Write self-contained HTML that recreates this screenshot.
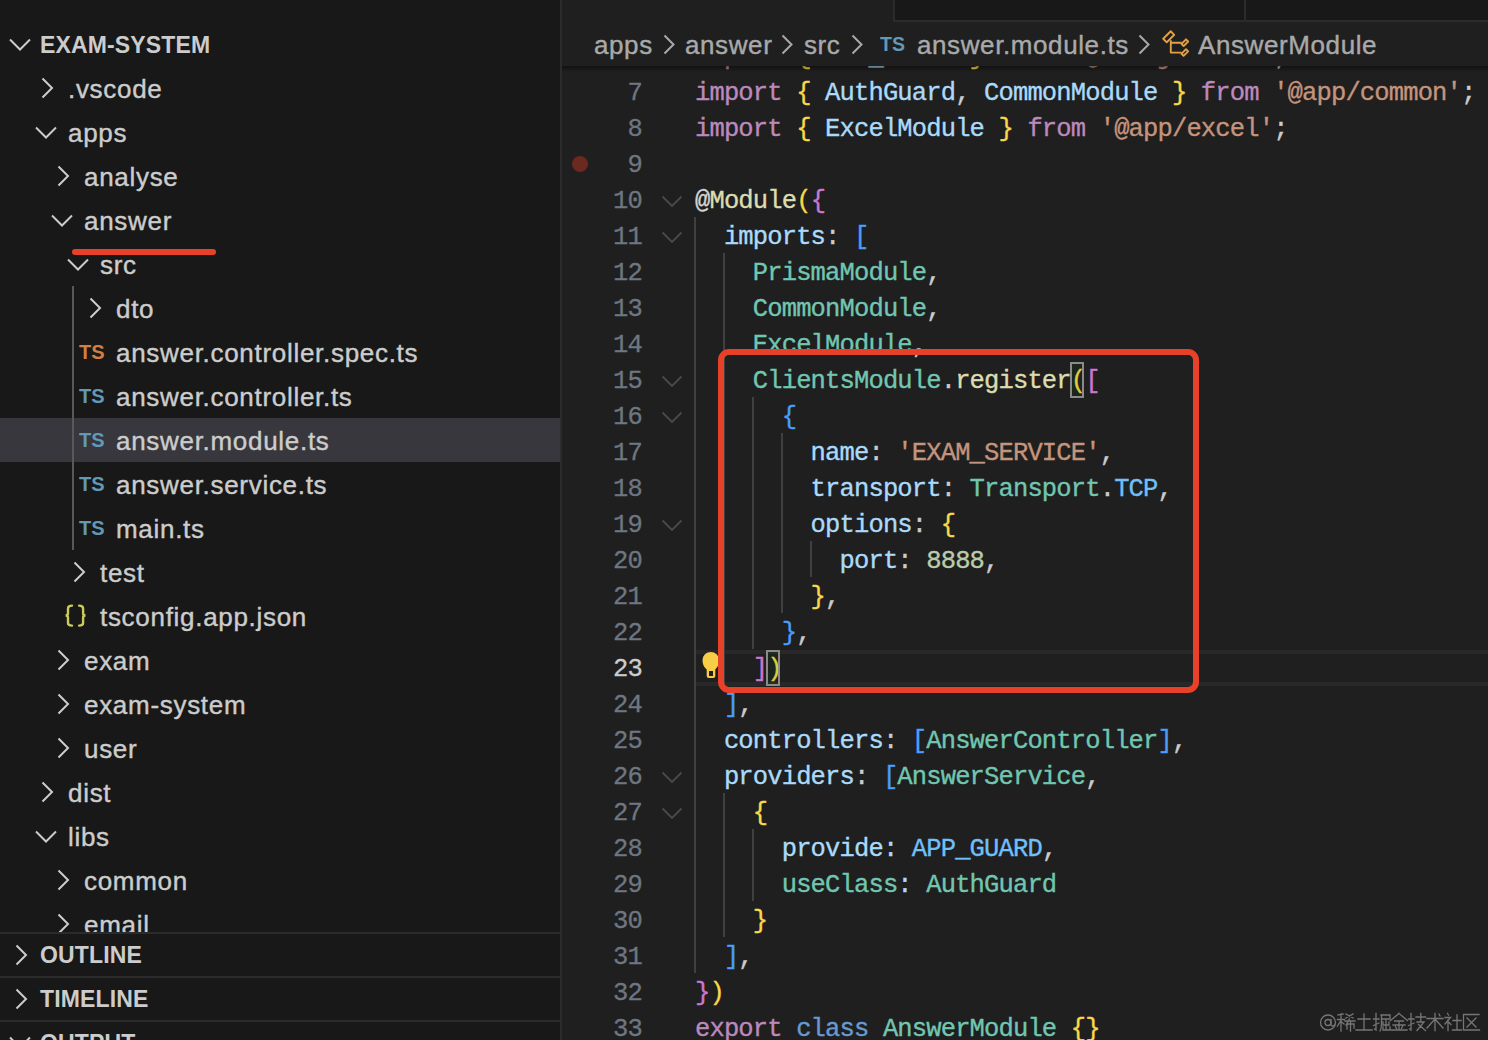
<!DOCTYPE html>
<html><head><meta charset="utf-8"><style>
*{margin:0;padding:0;box-sizing:border-box}
html,body{width:1488px;height:1040px;overflow:hidden;background:#1f1f1f}
body{position:relative;font-family:"Liberation Sans",sans-serif}
#side{position:absolute;left:0;top:0;width:560px;height:1040px;background:#181818;overflow:hidden}
#sideb{position:absolute;left:560px;top:0;width:2px;height:1040px;background:#2b2b2b}
.row{position:absolute;height:44px;line-height:44px;font-size:26px;color:#cccccc;white-space:nowrap;padding-top:1px;letter-spacing:0.7px;-webkit-text-stroke:0.4px currentColor}
.hdr{position:absolute;height:44px;line-height:44px;font-size:23px;font-weight:bold;color:#cccccc;white-space:nowrap;letter-spacing:0.15px;padding-top:1px}
.chev{position:absolute}
.tsi{position:absolute;height:44px;line-height:44px;font-size:20px;font-weight:bold;white-space:nowrap;letter-spacing:0px}
.jsi{position:absolute;height:44px;line-height:44px;font-size:25px;font-weight:bold;color:#cbcb5a;white-space:nowrap;letter-spacing:4px;margin-top:-3px}
.sel{position:absolute;left:0;width:560px;height:44px;background:#37373d}
.guideS{position:absolute;width:2px;background:#585858}
.cl{position:absolute;left:695px;height:36px;line-height:36px;font-family:"Liberation Mono",monospace;font-size:25.5px;white-space:pre;padding-top:3px;letter-spacing:-0.85px;-webkit-text-stroke:0.35px currentColor}
.ln{position:absolute;left:560px;width:82px;text-align:right;height:36px;line-height:36px;font-family:"Liberation Mono",monospace;font-size:25.5px;letter-spacing:-0.85px;white-space:pre;padding-top:3px;-webkit-text-stroke:0.3px currentColor}
.fold{position:absolute;left:661px}
.gd{position:absolute;width:2px;background:#404040}
#tabs{position:absolute;left:893px;top:0;width:595px;height:22px;background:#181818;border-left:2px solid #2b2b2b;border-bottom:2px solid #2b2b2b}
#tabdiv{position:absolute;left:1244px;top:0;width:2px;height:20px;background:#2b2b2b}
#bc{position:absolute;left:562px;top:22px;width:926px;height:44px;background:#1f1f1f;z-index:5}
#bcsh{position:absolute;left:562px;top:66px;width:926px;height:6px;background:linear-gradient(rgba(0,0,0,0.45),rgba(0,0,0,0));z-index:5}
.bct{position:absolute;top:1px;height:44px;line-height:44px;font-size:26px;color:#a9a9a9;white-space:nowrap;letter-spacing:0.6px;-webkit-text-stroke:0.4px currentColor}
.tsb{position:absolute;top:0;height:44px;line-height:44px;font-size:19.5px;font-weight:bold;color:#6398b7;white-space:nowrap;padding-top:0px}
.pane{position:absolute;left:0;width:560px;height:44px;background:#181818;border-top:2px solid #2b2b2b}
</style></head><body>
<div id="side">
<div class="sel" style="top:418px"></div>
<div class="guideS" style="left:72px;top:286px;height:264px"></div>
<svg class="chev" style="left:8px;top:38px" width="24" height="14" viewBox="0 0 24 14"><path d="M2 1.5 L12 11.5 L22 1.5" fill="none" stroke="#cccccc" stroke-width="2"/></svg>
<div class="hdr" style="left:40px;top:22px">EXAM-SYSTEM</div>
<svg class="chev" style="left:40px;top:76px" width="14" height="24" viewBox="0 0 14 24"><path d="M2.5 2.5 L12 12 L2.5 21.5" fill="none" stroke="#cccccc" stroke-width="2"/></svg>
<div class="row" style="left:68px;top:66px">.vscode</div>
<svg class="chev" style="left:34px;top:126px" width="24" height="14" viewBox="0 0 24 14"><path d="M2 1.5 L12 11.5 L22 1.5" fill="none" stroke="#cccccc" stroke-width="2"/></svg>
<div class="row" style="left:68px;top:110px">apps</div>
<svg class="chev" style="left:56px;top:164px" width="14" height="24" viewBox="0 0 14 24"><path d="M2.5 2.5 L12 12 L2.5 21.5" fill="none" stroke="#cccccc" stroke-width="2"/></svg>
<div class="row" style="left:84px;top:154px">analyse</div>
<svg class="chev" style="left:50px;top:214px" width="24" height="14" viewBox="0 0 24 14"><path d="M2 1.5 L12 11.5 L22 1.5" fill="none" stroke="#cccccc" stroke-width="2"/></svg>
<div class="row" style="left:84px;top:198px">answer</div>
<svg class="chev" style="left:66px;top:258px" width="24" height="14" viewBox="0 0 24 14"><path d="M2 1.5 L12 11.5 L22 1.5" fill="none" stroke="#cccccc" stroke-width="2"/></svg>
<div class="row" style="left:100px;top:242px">src</div>
<svg class="chev" style="left:88px;top:296px" width="14" height="24" viewBox="0 0 14 24"><path d="M2.5 2.5 L12 12 L2.5 21.5" fill="none" stroke="#cccccc" stroke-width="2"/></svg>
<div class="row" style="left:116px;top:286px">dto</div>
<div class="tsi" style="left:79px;top:330px;color:#d57e44">TS</div>
<div class="row" style="left:116px;top:330px">answer.controller.spec.ts</div>
<div class="tsi" style="left:79px;top:374px;color:#6398b7">TS</div>
<div class="row" style="left:116px;top:374px">answer.controller.ts</div>
<div class="tsi" style="left:79px;top:418px;color:#6398b7">TS</div>
<div class="row" style="left:116px;top:418px">answer.module.ts</div>
<div class="tsi" style="left:79px;top:462px;color:#6398b7">TS</div>
<div class="row" style="left:116px;top:462px">answer.service.ts</div>
<div class="tsi" style="left:79px;top:506px;color:#6398b7">TS</div>
<div class="row" style="left:116px;top:506px">main.ts</div>
<svg class="chev" style="left:72px;top:560px" width="14" height="24" viewBox="0 0 14 24"><path d="M2.5 2.5 L12 12 L2.5 21.5" fill="none" stroke="#cccccc" stroke-width="2"/></svg>
<div class="row" style="left:100px;top:550px">test</div>
<svg class="chev" style="left:62px;top:602px" width="30" height="30" viewBox="0 0 30 30"><g fill="none" stroke="#cbcb5a" stroke-width="2.4" stroke-linecap="round"><path d="M10 3.6 C7.5 3.6 6 4.5 6 6.5 L6 11.5 C6 12.8 5 13.5 3.6 13.5 C5 13.5 6 14.2 6 15.5 L6 21 C6 23 7.5 23.6 10 23.6"/><path d="M17.1 3.6 C19.6 3.6 21.1 4.5 21.1 6.5 L21.1 11.5 C21.1 12.8 22.1 13.5 23.5 13.5 C22.1 13.5 21.1 14.2 21.1 15.5 L21.1 21 C21.1 23 19.6 23.6 17.1 23.6"/></g></svg>
<div class="row" style="left:100px;top:594px">tsconfig.app.json</div>
<svg class="chev" style="left:56px;top:648px" width="14" height="24" viewBox="0 0 14 24"><path d="M2.5 2.5 L12 12 L2.5 21.5" fill="none" stroke="#cccccc" stroke-width="2"/></svg>
<div class="row" style="left:84px;top:638px">exam</div>
<svg class="chev" style="left:56px;top:692px" width="14" height="24" viewBox="0 0 14 24"><path d="M2.5 2.5 L12 12 L2.5 21.5" fill="none" stroke="#cccccc" stroke-width="2"/></svg>
<div class="row" style="left:84px;top:682px">exam-system</div>
<svg class="chev" style="left:56px;top:736px" width="14" height="24" viewBox="0 0 14 24"><path d="M2.5 2.5 L12 12 L2.5 21.5" fill="none" stroke="#cccccc" stroke-width="2"/></svg>
<div class="row" style="left:84px;top:726px">user</div>
<svg class="chev" style="left:40px;top:780px" width="14" height="24" viewBox="0 0 14 24"><path d="M2.5 2.5 L12 12 L2.5 21.5" fill="none" stroke="#cccccc" stroke-width="2"/></svg>
<div class="row" style="left:68px;top:770px">dist</div>
<svg class="chev" style="left:34px;top:830px" width="24" height="14" viewBox="0 0 24 14"><path d="M2 1.5 L12 11.5 L22 1.5" fill="none" stroke="#cccccc" stroke-width="2"/></svg>
<div class="row" style="left:68px;top:814px">libs</div>
<svg class="chev" style="left:56px;top:868px" width="14" height="24" viewBox="0 0 14 24"><path d="M2.5 2.5 L12 12 L2.5 21.5" fill="none" stroke="#cccccc" stroke-width="2"/></svg>
<div class="row" style="left:84px;top:858px">common</div>
<svg class="chev" style="left:56px;top:912px" width="14" height="24" viewBox="0 0 14 24"><path d="M2.5 2.5 L12 12 L2.5 21.5" fill="none" stroke="#cccccc" stroke-width="2"/></svg>
<div class="row" style="left:84px;top:902px">email</div>
<div style="position:absolute;left:72px;top:249px;width:144px;height:6px;border-radius:3px;background:#e8412a"></div>
<div class="pane" style="top:932px"><svg class="chev" style="left:14px;top:9px" width="14" height="24" viewBox="0 0 14 24"><path d="M2.5 2.5 L12 12 L2.5 21.5" fill="none" stroke="#cccccc" stroke-width="2"/></svg><div class="hdr" style="left:40px;top:-2px">OUTLINE</div></div>
<div class="pane" style="top:976px"><svg class="chev" style="left:14px;top:9px" width="14" height="24" viewBox="0 0 14 24"><path d="M2.5 2.5 L12 12 L2.5 21.5" fill="none" stroke="#cccccc" stroke-width="2"/></svg><div class="hdr" style="left:40px;top:-2px">TIMELINE</div></div>
<div class="pane" style="top:1020px"><svg class="chev" style="left:8px;top:14px" width="24" height="14" viewBox="0 0 24 14"><path d="M2 1.5 L12 11.5 L22 1.5" fill="none" stroke="#cccccc" stroke-width="2"/></svg><div class="hdr" style="left:40px;top:-2px">OUTPUT</div></div>
</div>
<div id="sideb"></div>
<div id="tabs"></div><div id="tabdiv"></div>
<div id="code">
<div style="position:absolute;left:696px;top:650px;width:792px;height:36px;border-top:4px solid #282828;border-bottom:4px solid #282828"></div>
<div class="gd" style="left:694.0px;top:217px;height:756px"></div>
<div class="gd" style="left:722.9px;top:253px;height:432px"></div>
<div class="gd" style="left:751.8px;top:397px;height:252px"></div>
<div class="gd" style="left:780.7px;top:433px;height:180px"></div>
<div class="gd" style="left:809.6px;top:541px;height:36px"></div>
<div class="gd" style="left:722.9px;top:793px;height:144px"></div>
<div class="gd" style="left:751.8px;top:829px;height:72px"></div>
<svg class="fold" style="top:195px" width="22" height="14" viewBox="0 0 22 14"><path d="M1.5 1.5 L11 11 L20.5 1.5" fill="none" stroke="#4a4a4a" stroke-width="1.8"/></svg>
<svg class="fold" style="top:231px" width="22" height="14" viewBox="0 0 22 14"><path d="M1.5 1.5 L11 11 L20.5 1.5" fill="none" stroke="#4a4a4a" stroke-width="1.8"/></svg>
<svg class="fold" style="top:375px" width="22" height="14" viewBox="0 0 22 14"><path d="M1.5 1.5 L11 11 L20.5 1.5" fill="none" stroke="#4a4a4a" stroke-width="1.8"/></svg>
<svg class="fold" style="top:411px" width="22" height="14" viewBox="0 0 22 14"><path d="M1.5 1.5 L11 11 L20.5 1.5" fill="none" stroke="#4a4a4a" stroke-width="1.8"/></svg>
<svg class="fold" style="top:519px" width="22" height="14" viewBox="0 0 22 14"><path d="M1.5 1.5 L11 11 L20.5 1.5" fill="none" stroke="#4a4a4a" stroke-width="1.8"/></svg>
<svg class="fold" style="top:771px" width="22" height="14" viewBox="0 0 22 14"><path d="M1.5 1.5 L11 11 L20.5 1.5" fill="none" stroke="#4a4a4a" stroke-width="1.8"/></svg>
<svg class="fold" style="top:807px" width="22" height="14" viewBox="0 0 22 14"><path d="M1.5 1.5 L11 11 L20.5 1.5" fill="none" stroke="#4a4a4a" stroke-width="1.8"/></svg>
<div class="cl" style="top:37px"><span style="color:#bc89bd">import</span><span style="color:#cccccc"> </span><span style="color:#f9d849">{</span><span style="color:#cccccc"> </span><span style="color:#aadafa">APP_GUARD</span><span style="color:#cccccc"> </span><span style="color:#f9d849">}</span><span style="color:#cccccc"> </span><span style="color:#bc89bd">from</span><span style="color:#cccccc"> </span><span style="color:#c5947c">&#x27;@nestjs/core&#x27;</span><span style="color:#cccccc">;</span></div>
<div class="cl" style="top:73px"><span style="color:#bc89bd">import</span><span style="color:#cccccc"> </span><span style="color:#f9d849">{</span><span style="color:#cccccc"> </span><span style="color:#aadafa">AuthGuard</span><span style="color:#cccccc">, </span><span style="color:#aadafa">CommonModule</span><span style="color:#cccccc"> </span><span style="color:#f9d849">}</span><span style="color:#cccccc"> </span><span style="color:#bc89bd">from</span><span style="color:#cccccc"> </span><span style="color:#c5947c">&#x27;@app/common&#x27;</span><span style="color:#cccccc">;</span></div>
<div class="ln" style="top:73px;color:#6e7681">7</div>
<div class="cl" style="top:109px"><span style="color:#bc89bd">import</span><span style="color:#cccccc"> </span><span style="color:#f9d849">{</span><span style="color:#cccccc"> </span><span style="color:#aadafa">ExcelModule</span><span style="color:#cccccc"> </span><span style="color:#f9d849">}</span><span style="color:#cccccc"> </span><span style="color:#bc89bd">from</span><span style="color:#cccccc"> </span><span style="color:#c5947c">&#x27;@app/excel&#x27;</span><span style="color:#cccccc">;</span></div>
<div class="ln" style="top:109px;color:#6e7681">8</div>
<div class="cl" style="top:145px"></div>
<div class="ln" style="top:145px;color:#6e7681">9</div>
<div class="cl" style="top:181px"><span style="color:#d4d4d4">@</span><span style="color:#dcdcaf">Module</span><span style="color:#f9d849">(</span><span style="color:#cc76d1">{</span></div>
<div class="ln" style="top:181px;color:#6e7681">10</div>
<div class="cl" style="top:217px"><span style="color:#aadafa">  imports</span><span style="color:#cccccc">: </span><span style="color:#4a9df8">[</span></div>
<div class="ln" style="top:217px;color:#6e7681">11</div>
<div class="cl" style="top:253px"><span style="color:#71c6b1">    PrismaModule</span><span style="color:#cccccc">,</span></div>
<div class="ln" style="top:253px;color:#6e7681">12</div>
<div class="cl" style="top:289px"><span style="color:#71c6b1">    CommonModule</span><span style="color:#cccccc">,</span></div>
<div class="ln" style="top:289px;color:#6e7681">13</div>
<div class="cl" style="top:325px"><span style="color:#71c6b1">    ExcelModule</span><span style="color:#cccccc">,</span></div>
<div class="ln" style="top:325px;color:#6e7681">14</div>
<div class="cl" style="top:361px"><span style="color:#71c6b1">    ClientsModule</span><span style="color:#cccccc">.</span><span style="color:#dcdcaf">register</span><span style="color:#f9d849">(</span><span style="color:#cc76d1">[</span></div>
<div class="ln" style="top:361px;color:#6e7681">15</div>
<div class="cl" style="top:397px"><span style="color:#4a9df8">      {</span></div>
<div class="ln" style="top:397px;color:#6e7681">16</div>
<div class="cl" style="top:433px"><span style="color:#aadafa">        name</span><span style="color:#cccccc">: </span><span style="color:#c5947c">&#x27;EXAM_SERVICE&#x27;</span><span style="color:#cccccc">,</span></div>
<div class="ln" style="top:433px;color:#6e7681">17</div>
<div class="cl" style="top:469px"><span style="color:#aadafa">        transport</span><span style="color:#cccccc">: </span><span style="color:#71c6b1">Transport</span><span style="color:#cccccc">.</span><span style="color:#6fbff9">TCP</span><span style="color:#cccccc">,</span></div>
<div class="ln" style="top:469px;color:#6e7681">18</div>
<div class="cl" style="top:505px"><span style="color:#aadafa">        options</span><span style="color:#cccccc">: </span><span style="color:#f9d849">{</span></div>
<div class="ln" style="top:505px;color:#6e7681">19</div>
<div class="cl" style="top:541px"><span style="color:#aadafa">          port</span><span style="color:#cccccc">: </span><span style="color:#bacdab">8888</span><span style="color:#cccccc">,</span></div>
<div class="ln" style="top:541px;color:#6e7681">20</div>
<div class="cl" style="top:577px"><span style="color:#f9d849">        }</span><span style="color:#cccccc">,</span></div>
<div class="ln" style="top:577px;color:#6e7681">21</div>
<div class="cl" style="top:613px"><span style="color:#4a9df8">      }</span><span style="color:#cccccc">,</span></div>
<div class="ln" style="top:613px;color:#6e7681">22</div>
<div class="cl" style="top:649px"><span style="color:#cc76d1">    ]</span><span style="color:#f9d849">)</span></div>
<div class="ln" style="top:649px;color:#cccccc">23</div>
<div class="cl" style="top:685px"><span style="color:#4a9df8">  ]</span><span style="color:#cccccc">,</span></div>
<div class="ln" style="top:685px;color:#6e7681">24</div>
<div class="cl" style="top:721px"><span style="color:#aadafa">  controllers</span><span style="color:#cccccc">: </span><span style="color:#4a9df8">[</span><span style="color:#71c6b1">AnswerController</span><span style="color:#4a9df8">]</span><span style="color:#cccccc">,</span></div>
<div class="ln" style="top:721px;color:#6e7681">25</div>
<div class="cl" style="top:757px"><span style="color:#aadafa">  providers</span><span style="color:#cccccc">: </span><span style="color:#4a9df8">[</span><span style="color:#71c6b1">AnswerService</span><span style="color:#cccccc">,</span></div>
<div class="ln" style="top:757px;color:#6e7681">26</div>
<div class="cl" style="top:793px"><span style="color:#f9d849">    {</span></div>
<div class="ln" style="top:793px;color:#6e7681">27</div>
<div class="cl" style="top:829px"><span style="color:#aadafa">      provide</span><span style="color:#aadafa">: </span><span style="color:#6fbff9">APP_GUARD</span><span style="color:#cccccc">,</span></div>
<div class="ln" style="top:829px;color:#6e7681">28</div>
<div class="cl" style="top:865px"><span style="color:#71c6b1">      useClass</span><span style="color:#aadafa">: </span><span style="color:#71c6b1">AuthGuard</span></div>
<div class="ln" style="top:865px;color:#6e7681">29</div>
<div class="cl" style="top:901px"><span style="color:#f9d849">    }</span></div>
<div class="ln" style="top:901px;color:#6e7681">30</div>
<div class="cl" style="top:937px"><span style="color:#4a9df8">  ]</span><span style="color:#cccccc">,</span></div>
<div class="ln" style="top:937px;color:#6e7681">31</div>
<div class="cl" style="top:973px"><span style="color:#cc76d1">}</span><span style="color:#f9d849">)</span></div>
<div class="ln" style="top:973px;color:#6e7681">32</div>
<div class="cl" style="top:1009px"><span style="color:#bc89bd">export</span><span style="color:#cccccc"> </span><span style="color:#679ad1">class</span><span style="color:#cccccc"> </span><span style="color:#71c6b1">AnswerModule</span><span style="color:#cccccc"> </span><span style="color:#f9d849">{}</span></div>
<div class="ln" style="top:1009px;color:#6e7681">33</div>
<div style="position:absolute;left:1070px;top:362px;width:14px;height:36px;border:2px solid #8a8a8a;background:rgba(0,100,0,0.1)"></div>
<div style="position:absolute;left:766px;top:650px;width:14px;height:36px;border:2px solid #8a8a8a;background:rgba(0,100,0,0.1)"></div>
<div style="position:absolute;left:572px;top:156px;width:16px;height:16px;border-radius:50%;background:#6b2920"></div>
<svg style="position:absolute;left:700px;top:650px" width="22" height="30" viewBox="0 0 22 30"><path d="M6.7 19.6 C4.2 17.3 2.5 14.6 2.5 10.2 A8.3 8.3 0 1 1 19.1 10.2 C19.1 14.6 17.4 17.3 15.3 19.6 L15.3 26 Q15.3 28.1 13.2 28.1 L8.8 28.1 Q6.7 28.1 6.7 26 Z" fill="#f7ce46"/><rect x="9" y="21" width="4" height="5" fill="#1f1f1f"/></svg>
<div style="position:absolute;left:718px;top:349px;width:481px;height:344px;border:6px solid #e8412a;border-radius:11px"></div>
</div>
<div id="bc">
<div class="bct" style="left:32px">apps</div>
<svg class="chev" style="left:100px;top:12px" width="14" height="22" viewBox="0 0 14 22"><path d="M2.5 1.5 L11.5 10.5 L2.5 19.5" fill="none" stroke="#a9a9a9" stroke-width="2"/></svg>
<div class="bct" style="left:123px">answer</div>
<svg class="chev" style="left:218px;top:12px" width="14" height="22" viewBox="0 0 14 22"><path d="M2.5 1.5 L11.5 10.5 L2.5 19.5" fill="none" stroke="#a9a9a9" stroke-width="2"/></svg>
<div class="bct" style="left:242px">src</div>
<svg class="chev" style="left:288px;top:12px" width="14" height="22" viewBox="0 0 14 22"><path d="M2.5 1.5 L11.5 10.5 L2.5 19.5" fill="none" stroke="#a9a9a9" stroke-width="2"/></svg>
<div class="tsb" style="left:318px">TS</div>
<div class="bct" style="left:355px">answer.module.ts</div>
<svg class="chev" style="left:575px;top:12px" width="14" height="22" viewBox="0 0 14 22"><path d="M2.5 1.5 L11.5 10.5 L2.5 19.5" fill="none" stroke="#a9a9a9" stroke-width="2"/></svg>
<svg style="position:absolute;left:593px;top:3px" width="40" height="37" viewBox="0 0 40 37"><g fill="none" stroke="#e2a144" stroke-width="1.9" stroke-linejoin="round"><rect x="-5.3" y="-2.5" width="10.6" height="5" transform="translate(13.7 11.8) rotate(-45)"/><rect x="-3.2" y="-1.5" width="6.4" height="3" transform="translate(29.8 17.7) rotate(-45)"/><rect x="-3.2" y="-1.5" width="6.4" height="3" transform="translate(29.8 27.6) rotate(-45)"/><path d="M15.8 15.2 L15.8 27.6 L26.6 27.6 M15.8 17.8 L26.6 17.8"/></g></svg>
<div class="bct" style="left:636px">AnswerModule</div>
</div>
<div id="bcsh"></div>
<svg style="position:absolute;left:1318px;top:1011px" width="164" height="24" viewBox="0 0 164 24"><g fill="none" stroke="#767676" stroke-width="1.3" stroke-linecap="square">
<g transform="translate(2,2)"><circle cx="8" cy="9.5" r="7.5"/><circle cx="8" cy="9.5" r="3"/><path d="M11 6.5 L11 12 Q12 14 14.5 12"/></g>
<g transform="translate(19,2)"><path d="M1 2 L6 1 M4 1 L4 18 M0.5 6.5 L7.5 6.5 M4 7.5 L0.5 13 M4 8.5 L7 11 M9 1 L16 5 M16 1 L9 5 M8 8 L18 8 M12.5 6 L9 12 M10 11 L10 16 M10 11 L17 11 L17 15 M13.5 9 L13.5 18"/></g>
<g transform="translate(37,2)"><path d="M3 6 L15 6 M9 1 L9 17 M1 17 L17 17"/></g>
<g transform="translate(55,2)"><path d="M0.5 6 L6 6 M3 0.5 L3 17 L1.5 16 M0.5 12.5 L6 10 M8 2 L17 2 L17 6 L8.5 6 M8.5 2 L8.5 11 Q8.5 15 7 18 M13 7 L13 17 M10 9 L10 12 L16 12 L16 9 M10 14 L10 17 L17 17 L17 14"/></g>
<g transform="translate(72,2)"><path d="M9 0.5 L0.5 7.5 M9 0.5 L17.5 7.5 M4.5 8 L13.5 8 M3 12 L15 12 M9 8 L9 17 M5.5 13.5 L6.5 15.5 M12.5 13.5 L11.5 15.5 M1 17 L17 17"/></g>
<g transform="translate(90,2)"><path d="M0.5 6 L6 6 M3 0.5 L3 17 L1.5 16 M0.5 12.5 L6 10 M8 4 L17.5 4 M12.8 0.5 L12.8 8 M9 9 L16 9 L9 17.5 M10.5 11.5 L17.5 17.5"/></g>
<g transform="translate(108,2)"><path d="M1 5.5 L17 5.5 M9 0.5 L9 17.5 M9 6 L1 15 M9 6 L17 15 M13 1 L14 3"/></g>
<g transform="translate(126,2)"><path d="M3.5 0.5 L4.5 2 M1 4.5 L6.5 4.5 L1 11 M4 7 L4 17.5 M5 9.5 L7 11.5 M9 7.5 L17 7.5 M13 2 L13 17 M8.5 17 L17.5 17"/></g>
<g transform="translate(144,2)"><path d="M17 1.5 L1.5 1.5 L1.5 17 L17.5 17 M5 5 L14 14 M14 5 L5 14"/></g>
</g></svg>
</body></html>
